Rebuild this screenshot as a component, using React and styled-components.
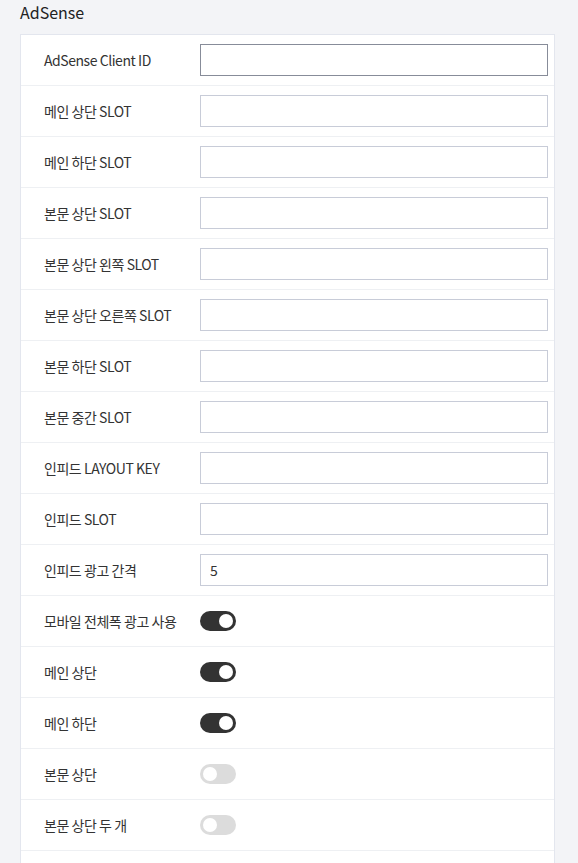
import styled, { createGlobalStyle } from "styled-components";

const GlobalStyle = createGlobalStyle`
  html, body {
    margin: 0;
    background: #f3f4f7;
    font-family: "Noto Sans CJK KR", "Noto Sans", sans-serif;
    color: #333;
  }
`;

const fields = [
  { label: "AdSense Client ID", type: "text", focused: true },
  { label: "메인 상단 SLOT", type: "text" },
  { label: "메인 하단 SLOT", type: "text" },
  { label: "본문 상단 SLOT", type: "text" },
  { label: "본문 상단 왼쪽 SLOT", type: "text" },
  { label: "본문 상단 오른쪽 SLOT", type: "text" },
  { label: "본문 하단 SLOT", type: "text" },
  { label: "본문 중간 SLOT", type: "text" },
  { label: "인피드 LAYOUT KEY", type: "text" },
  { label: "인피드 SLOT", type: "text" },
  { label: "인피드 광고 간격", type: "text", value: "5" },
  { label: "모바일 전체폭 광고 사용", type: "toggle", on: true },
  { label: "메인 상단", type: "toggle", on: true },
  { label: "메인 하단", type: "toggle", on: true },
  { label: "본문 상단", type: "toggle", on: false },
  { label: "본문 상단 두 개", type: "toggle", on: false },
];

export default function App() {
  return (
    <Page>
      <GlobalStyle />
      <Title>AdSense</Title>
      <Card>
        {fields.map((f) => (
          <Row key={f.label}>
            <Label>{f.label}</Label>
            {f.type === "text" ? (
              <Input defaultValue={f.value || ""} $focused={f.focused} />
            ) : (
              <Toggle $on={f.on}>
                <Knob $on={f.on} />
              </Toggle>
            )}
          </Row>
        ))}
      </Card>
    </Page>
  );
}

const Page = styled.div`
  padding: 0 23px 0 20px;
`;

const Title = styled.h2`
  margin: 0;
  height: 34px;
  font-size: 16px;
  font-weight: 400;
  line-height: 24px;
  color: #222;
`;

const Card = styled.div`
  background: #fff;
  border: 1px solid #e3e6ee;
  border-bottom: none;
  padding-bottom: 50px;
`;

const Row = styled.div`
  display: flex;
  align-items: center;
  height: 50px;
  padding: 0 6px 0 23px;
  border-bottom: 1px solid #eef0f3;
`;

const Label = styled.div`
  width: 156px;
  flex-shrink: 0;
  font-size: 14px;
  letter-spacing: -0.45px;
  color: #333;
`;

const Input = styled.input`
  flex: 1;
  min-width: 0;
  height: 32px;
  box-sizing: border-box;
  border: 1px solid ${(p) => (p.$focused ? "#878c99" : "#c8ccd8")};
  background: #fff;
  padding: 0 9px;
  font-family: inherit;
  font-size: 14px;
  color: #333;
  outline: none;
`;

const Toggle = styled.div`
  position: relative;
  width: 36px;
  height: 20px;
  border-radius: 10px;
  background: ${(p) => (p.$on ? "#333" : "#dcdcdc")};
`;

const Knob = styled.span`
  position: absolute;
  top: 3px;
  left: ${(p) => (p.$on ? "19px" : "3px")};
  width: 14px;
  height: 14px;
  border-radius: 50%;
  background: #fff;
`;
